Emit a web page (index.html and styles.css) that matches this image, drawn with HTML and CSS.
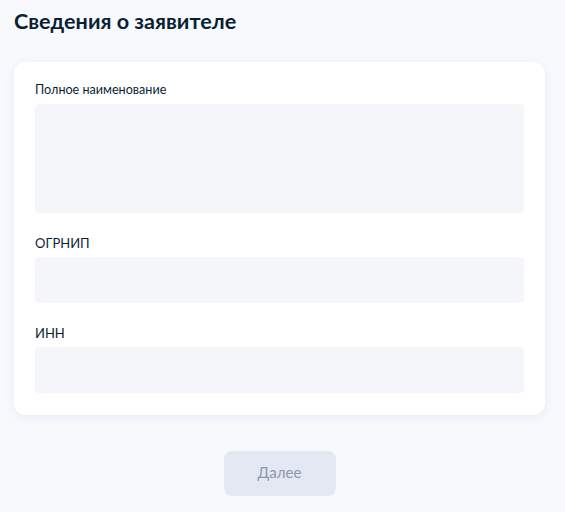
FILE: index.html
```html
<!DOCTYPE html>
<html lang="ru">
<head>
<meta charset="utf-8">
<link rel="stylesheet" href="styles.css">
</head>
<body>
<div class="page">
  <h1 class="title">Сведения о заявителе</h1>
  <div class="card">
    <div class="field">
      <div class="label label-sm">Полное наименование</div>
      <div class="input input-tall"></div>
    </div>
    <div class="field">
      <div class="label">ОГРНИП</div>
      <div class="input"></div>
    </div>
    <div class="field">
      <div class="label">ИНН</div>
      <div class="input"></div>
    </div>
  </div>
  <div class="actions">
    <button class="btn" type="button">Далее</button>
  </div>
</div>
</body>
</html>
```
FILE: styles.css
```css
html, body {
  margin: 0;
  padding: 0;
}
body {
  background: #f8f9fd;
  font-family: Lato, "Noto Sans", sans-serif;
  color: #0b1f33;
}
.page {
  padding: 7px 20px 0 14px;
}
.title {
  margin: 0;
  font-size: 21.6px;
  line-height: 28px;
  font-weight: 700;
  color: #0b1f33;
}
.card {
  margin-top: 27px;
  background: #ffffff;
  border-radius: 12px;
  box-shadow: 0 2px 10px rgba(200, 210, 235, 0.35);
  padding: 18px 21px 22px;
  display: flex;
  flex-direction: column;
  gap: 21px;
}
.field {
  display: flex;
  flex-direction: column;
  gap: 6px;
}
.label {
  font-size: 13px;
  line-height: 17px;
  color: #0b1f33;
  margin-top: 1px;
  margin-bottom: -1px;
}
.label-sm {
  font-size: 12.6px;
  line-height: 18px;
}
.input {
  height: 46px;
  background: #f5f6f9;
  border-radius: 4px;
}
.input-tall {
  height: 109px;
}
.actions {
  display: flex;
  justify-content: center;
  padding-top: 36px;
}
.btn {
  width: 112px;
  height: 45px;
  border: 0;
  border-radius: 8px;
  background: #e4e8f2;
  color: #8d98ab;
  font-family: Lato, "Noto Sans", sans-serif;
  font-size: 15px;
  padding: 0 0 3px;
}
```
